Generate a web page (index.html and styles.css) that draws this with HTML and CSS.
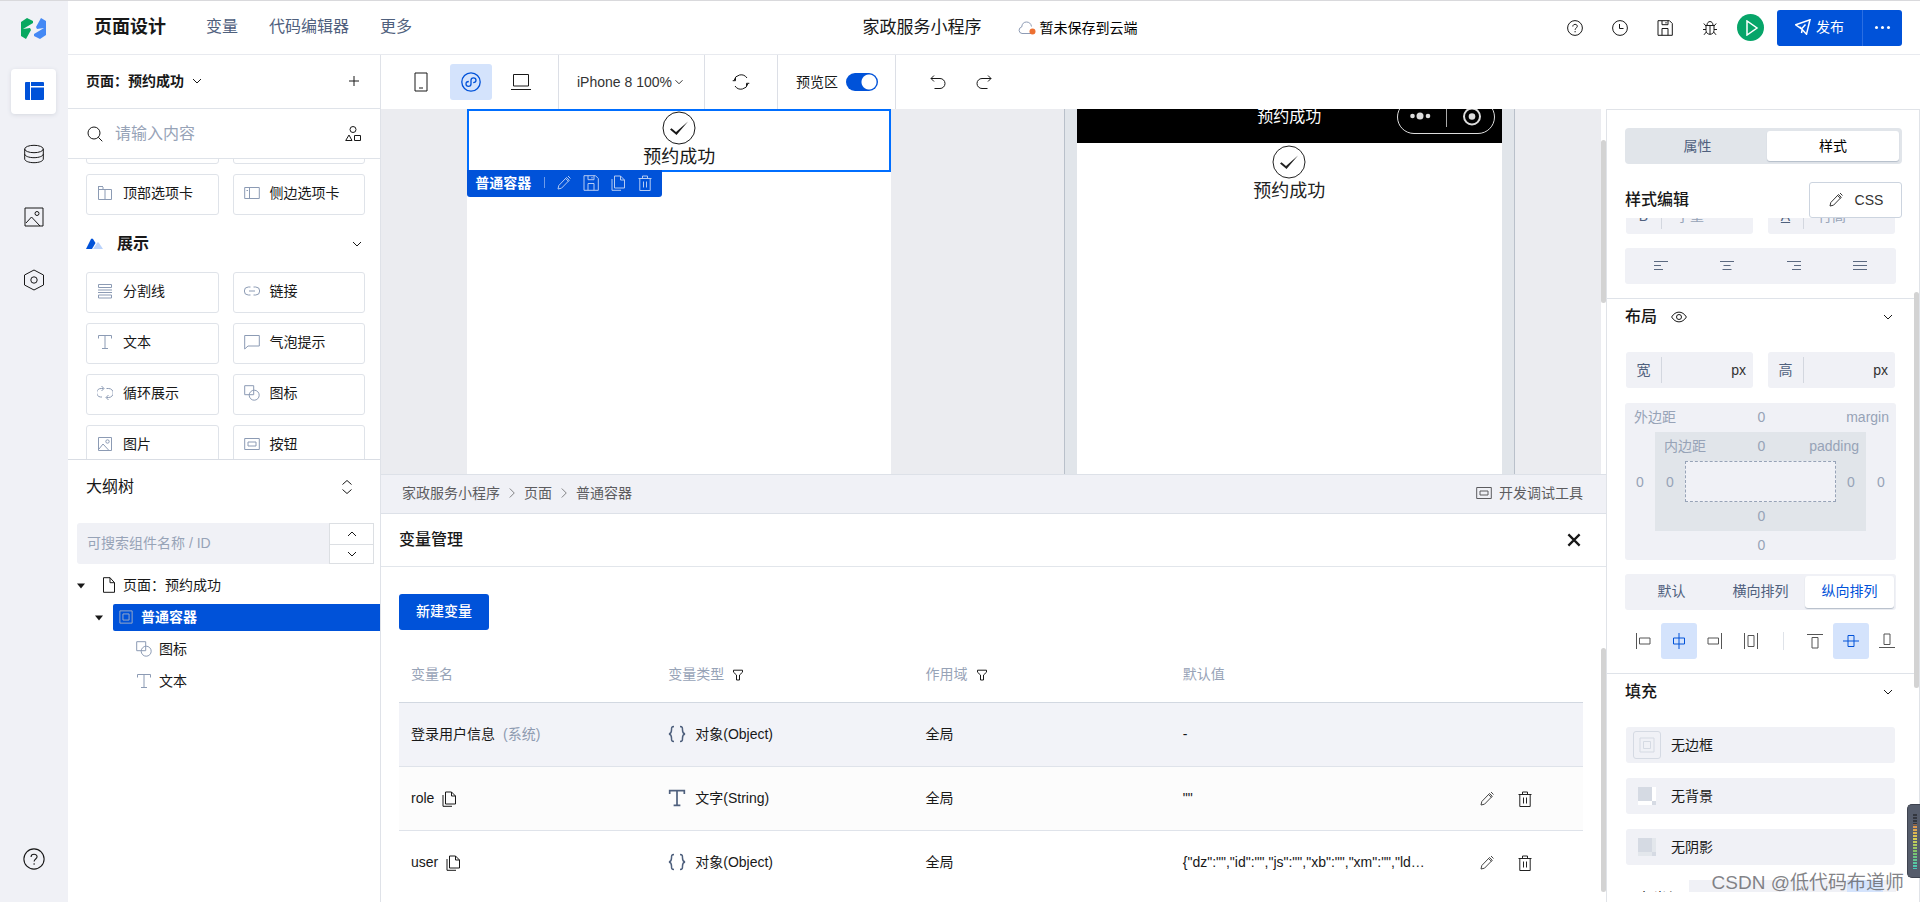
FILE: index.html
```html
<!DOCTYPE html>
<html lang="zh-CN">
<head>
<meta charset="utf-8">
<title>页面设计</title>
<link rel="stylesheet" href="styles.css">
</head>
<body>
<svg class="sprite" aria-hidden="true">
  <symbol id="i-chev" viewBox="0 0 16 16"><path d="M4 6l4 4 4-4"/></symbol>
  <symbol id="i-chev-up" viewBox="0 0 16 16"><path d="M4 10l4-4 4 4"/></symbol>
  <symbol id="i-chev-right" viewBox="0 0 16 16"><path d="M5 2l6 6-6 6"/></symbol>
  <symbol id="i-updown" viewBox="0 0 16 16"><path d="M3.500 5.500L8 1.500l4.500 4M3.500 10.500l4.500 4 4.500-4"/></symbol>
  <symbol id="i-tri" viewBox="0 0 16 16"><path d="M0 3h16L8 13z" fill="currentColor" stroke="none"/></symbol>
  <symbol id="i-layout" viewBox="0 0 20 20"><path d="M2 1h4v18H2a1 1 0 0 1-1-1V2a1 1 0 0 1 1-1zM7 1h12a1 1 0 0 1 1 1v3H7zM7 6.500h13V18a1 1 0 0 1-1 1H7z" fill="currentColor" stroke="none"/></symbol>
  <symbol id="i-db" viewBox="0 0 20 20"><ellipse cx="10" cy="5" rx="9.300" ry="3.700"/><path d="M.7 5v10c0 2 4 3.700 9.300 3.700s9.300-1.700 9.300-3.700V5M.7 10c0 2 4 3.700 9.300 3.700s9.300-1.700 9.300-3.700"/></symbol>
  <symbol id="i-img" viewBox="0 0 20 20"><path d="M1 1h18v18H1z"/><circle cx="13" cy="6.500" r="2"/><path d="M2 16l5.500-6L16 19"/></symbol>
  <symbol id="i-img-s" viewBox="0 0 16 16"><path d="M1.500 1.500h13v13h-13z"/><circle cx="10.500" cy="5.500" r="1.700"/><path d="M2 13l4-5 6 6.500"/></symbol>
  <symbol id="i-hex" viewBox="0 0 22 22"><path d="M11 1l9.500 5v10L11 21l-9.500-5V6z"/><circle cx="11" cy="11" r="3.200"/></symbol>
  <symbol id="i-help" viewBox="0 0 20 20"><circle cx="10" cy="10" r="9.200"/><path d="M7.300 8.200c0-3.400 5.500-3.300 5.500-.2 0 2-2.700 2-2.700 4.300"/><path d="M10.100 13.800v1.500"/></symbol>
  <symbol id="i-help-s" viewBox="0 0 16 16"><circle cx="8" cy="8" r="7.400"/><path d="M5.800 6.500c0-2.900 4.500-2.800 4.500-.2 0 1.700-2.200 1.600-2.200 3.500M8.100 11v1.300"/></symbol>
  <symbol id="i-clock" viewBox="0 0 16 16"><circle cx="8" cy="8" r="7.400"/><path d="M7.500 4v4.500H11.500"/></symbol>
  <symbol id="i-save" viewBox="0 0 16 16"><path d="M1 .7h11.500L15.300 3.500v11.800H1zM5 .7v4h6v-4M9 2v1.500M5 15.300V8.500h6v6.800"/></symbol>
  <symbol id="i-bug" viewBox="0 0 16 16"><path d="M4 5.500h8v5c0 5-8 5-8 0zM5 5.300c0-5 6-5 6 0M8 6v8.500M1 9.500h3M12 9.500h3M4 6L1.800 3.500M12 6l2.200-2.500M4.300 12L2 14.800M11.700 12l2.300 2.800"/></symbol>
  <symbol id="i-plus" viewBox="0 0 16 16"><path d="M3 8h10M8 3v10"/></symbol>
  <symbol id="i-search" viewBox="0 0 16 16"><circle cx="7" cy="7" r="6"/><path d="M11.300 11.300l4 4"/></symbol>
  <symbol id="i-shapes" viewBox="0 0 16 16"><circle cx="8" cy="3.500" r="3"/><path d="M.7 14.500L4 9l3 5.500zM9.500 9.500h6v5h-6z"/></symbol>
  <symbol id="i-toptab" viewBox="0 0 16 16"><path d="M1.500 4.500h13v10h-13zM1 1.500h5M8 4.500v10M1.500 2v3M6 2v2"/></symbol>
  <symbol id="i-sidetab" viewBox="0 0 16 16"><path d="M.7 2.500h14.600v11H.7zM5.500 2.500v11M2.500 5.500h1.500"/></symbol>
  <symbol id="i-divider" viewBox="0 0 16 16"><path d="M1.500 1.500h13v3h-13zM1 7h14M1 9.500h14M1.500 12h13v3h-13z"/></symbol>
  <symbol id="i-link" viewBox="0 0 16 16"><path d="M6.500 4H4.300a4 4 0 0 0 0 8h2.200M9.500 4h2.200a4 4 0 0 1 0 8H9.500M5 8h6"/></symbol>
  <symbol id="i-text" viewBox="0 0 16 16"><path d="M1.500 4.500v-3h13v3M8 1.500v13M5 14.500h6"/></symbol>
  <symbol id="i-bubble" viewBox="0 0 16 16"><path d="M.7 1.500h14.600v10.500H4L.7 15z"/></symbol>
  <symbol id="i-loop" viewBox="0 0 16 16"><path d="M6.500 3.500H4.300a4 4 0 0 0-.8 8.500H5M4.500 1L7 3.500 4.500 6M9.500 12.500h2.200a4 4 0 0 0 0-9H9.500M11.500 10L9 12.500l2.500 2.500"/></symbol>
  <symbol id="i-combo" viewBox="0 0 16 16"><path d="M.7.700h9v9h-9z"/><circle cx="10.200" cy="10.200" r="5"/></symbol>
  <symbol id="i-button" viewBox="0 0 16 16"><path d="M.7 2.500h14.600v11H.7zM4 6h8v4H4z"/></symbol>
  <symbol id="i-page" viewBox="0 0 16 16"><path d="M2.500.700h6.500l4.500 5v9.600h-11zM9 .7v5h4.500"/></symbol>
  <symbol id="i-box" viewBox="0 0 16 16"><path d="M1 1h14v14H1zM4.500 4.500h7v7h-7z"/></symbol>
  <symbol id="i-phone" viewBox="0 0 14 20"><path d="M1 1h12v18H1zM5 16h4"/></symbol>
  <symbol id="i-mini" viewBox="0 0 20 20"><circle cx="10" cy="10" r="9.200"/><path d="M7.800 9.500c-1.800 0-2.800 1-2.800 2.400 0 3.200 5 3.200 5 0V8.200c0-3.200 5-3.200 5 0 0 1.400-1 2.400-2.800 2.400"/></symbol>
  <symbol id="i-laptop" viewBox="0 0 20 18"><path d="M2.500 1.500h15v11.500h-15zM0 16.500h20"/></symbol>
  <symbol id="i-refresh" viewBox="0 0 18 18"><path d="M2 7.500A7.200 7.200 0 0 1 15 5M16 10.500A7.200 7.200 0 0 1 3 13M.7 7.700h2.800V5M17.300 10.300h-2.800V13"/></symbol>
  <symbol id="i-undo" viewBox="0 0 16 16"><path d="M4 1.500L1 4.500l3 3M1 4.500h9a5 5 0 0 1 0 10H4.500"/></symbol>
  <symbol id="i-redo" viewBox="0 0 16 16"><path d="M12 1.500l3 3-3 3M15 4.500H6a5 5 0 0 0 0 10h5.500"/></symbol>
  <symbol id="i-cloud" viewBox="0 0 18 14"><path d="M13 12.500H4a3.300 3.300 0 0 1-.3-6.500C4 2.500 6 1 8.500 1S13 2.500 13.500 5.500"/><circle cx="14.500" cy="10.500" r="3" fill="#ed7032" stroke="none"/></symbol>
  <symbol id="i-pencil" viewBox="0 0 16 16"><path d="M2 14l.8-3.500 7.700-8 2.800 2.700-7.800 8zM9.500 3.500l3 2.800M12 1l2.500 2.500"/></symbol>
  <symbol id="i-copy" viewBox="0 0 16 16"><path d="M4.500 1h6L14.500 5v8h-10zM10.500 1v4h4M2 4v11.300h9"/></symbol>
  <symbol id="i-trash" viewBox="0 0 16 16"><path d="M2.800 3.500h10.400v12H2.800zM1.500 3.500h13M5.500 3.300V1h5v2.300M6.500 6.500v6M9.500 6.500v6"/></symbol>
  <symbol id="i-check" viewBox="0 0 34 34"><circle cx="17" cy="17" r="16"/><path d="M8 18.500l1.500-1.300L14 21 26 10.500 14.500 24z" fill="currentColor" stroke="none"/></symbol>
  <symbol id="i-funnel" viewBox="0 0 12 12"><path d="M1.500 1.200h9v2L7.500 6v5h-3V6l-3-2.800z"/></symbol>
  <symbol id="i-brace" viewBox="0 0 18 18"><path d="M6 1.500c-2.500 0-2.500 1-2.500 3.500S3.300 8.500 1 9c2.300.5 2.500 1.500 2.500 4s0 3.500 2.500 3.500M12 1.500c2.500 0 2.500 1 2.500 3.500s.2 3.500 2.500 4c-2.300.5-2.500 1.500-2.500 4s0 3.500-2.500 3.500"/></symbol>
  <symbol id="i-close" viewBox="0 0 16 16"><path d="M3 3l10 10M13 3L3 13"/></symbol>
  <symbol id="i-plane" viewBox="0 0 16 16"><path d="M.8 5.800L15 .8l-3.500 14.400-4.300-4.700zM7.200 10.500l-.7 3.500M4.500 7.800l2.200 2L10.500 5.500"/></symbol>
  <symbol id="i-eye" viewBox="0 0 16 12"><path d="M.6 6C4.500-.5 11.500-.5 15.400 6c-3.900 6.500-10.900 6.500-14.800 0z"/><circle cx="8" cy="6" r="2.500"/></symbol>
  <symbol id="i-al" viewBox="0 0 14 12"><path d="M0 1.500h14M0 5.500h7M0 9.500h9"/></symbol>
  <symbol id="i-ac" viewBox="0 0 14 12"><path d="M0 1.500h14M3.500 5.500h7M2.500 9.500h9"/></symbol>
  <symbol id="i-ar" viewBox="0 0 14 12"><path d="M0 1.500h14M7 5.500h7M5 9.500h9"/></symbol>
  <symbol id="i-aj" viewBox="0 0 14 12"><path d="M0 1.500h14M0 5.500h14M0 9.500h14"/></symbol>
  <symbol id="i-jl" viewBox="0 0 16 16"><path d="M1.500 0v16M4.500 5h10.500v6H4.500z"/></symbol>
  <symbol id="i-jc" viewBox="0 0 16 16"><path d="M8 0v16M2.500 5h11v6h-11z"/></symbol>
  <symbol id="i-jr" viewBox="0 0 16 16"><path d="M14.500 0v16M1 5h10.500v6H1z"/></symbol>
  <symbol id="i-js" viewBox="0 0 16 16"><path d="M1.500 0v16M14.500 0v16M5 2.500h6v11H5z"/></symbol>
  <symbol id="i-vt" viewBox="0 0 16 16"><path d="M0 1.500h16M5 4.500h6v10.500H5z"/></symbol>
  <symbol id="i-vc" viewBox="0 0 16 16"><path d="M0 8h16M5 2.500h6v11H5z"/></symbol>
  <symbol id="i-vb" viewBox="0 0 16 16"><path d="M0 14.500h16M5 1h6v10.500H5z"/></symbol>
</svg>

<nav class="rail" aria-label="主导航">
  <svg class="logo" viewBox="0 0 25 21" aria-hidden="true"><path fill="#07a85f" d="M0 4l6-4 6 3v2L2 11l7-1 1 2-5 9-5-3z"/><path fill="#4489f5" d="M25 17l-6 4-6-3v-2l10-6-7 1-1-2 5-9 5 3z"/></svg>
  <button class="rail-btn active" aria-label="页面"><svg class="ic s20"><use href="#i-layout"/></svg></button>
  <button class="rail-btn" aria-label="数据源"><svg class="ic s20"><use href="#i-db"/></svg></button>
  <button class="rail-btn" aria-label="素材"><svg class="ic s20"><use href="#i-img"/></svg></button>
  <button class="rail-btn" aria-label="设置"><svg class="ic s22"><use href="#i-hex"/></svg></button>
  <button class="rail-btn rail-help" aria-label="帮助"><svg class="ic s22"><use href="#i-help"/></svg></button>
</nav>

<div class="app">
  <header class="topbar">
    <div class="top-left">
      <h1>页面设计</h1>
      <nav class="top-nav"><a href="#">变量</a><a href="#">代码编辑器</a><a href="#">更多</a></nav>
    </div>
    <div class="top-center">
      <span class="app-name">家政服务小程序</span>
      <span class="save-state"><svg class="ic cloud"><use href="#i-cloud"/></svg>暂未保存到云端</span>
    </div>
    <div class="top-right">
      <button aria-label="帮助"><svg class="ic s16"><use href="#i-help-s"/></svg></button>
      <button aria-label="历史"><svg class="ic s16"><use href="#i-clock"/></svg></button>
      <button aria-label="保存"><svg class="ic s16"><use href="#i-save"/></svg></button>
      <button aria-label="调试"><svg class="ic s16"><use href="#i-bug"/></svg></button>
      <button class="play" aria-label="预览"><svg class="ic s16" viewBox="0 0 16 16"><path d="M4 1v14l10-7z"/></svg></button>
      <div class="publish"><button class="pub-main"><svg class="ic s16"><use href="#i-plane"/></svg>发布</button><button class="pub-more" aria-label="更多发布选项"><i></i><i></i><i></i></button></div>
    </div>
  </header>

  <div class="body">
    <aside class="left">
      <div class="page-head">
        <button class="page-pick">页面：预约成功<svg class="ic s16"><use href="#i-chev"/></svg></button>
        <button aria-label="新建页面"><svg class="ic s16"><use href="#i-plus"/></svg></button>
      </div>
      <div class="comp-search">
        <svg class="ic s16"><use href="#i-search"/></svg>
        <input type="text" placeholder="请输入内容" aria-label="搜索组件">
        <button aria-label="组件库"><svg class="ic s16"><use href="#i-shapes"/></svg></button>
      </div>
      <div class="comp-list">
        <div class="comp-scroll">
          <div class="comp-grid">
            <div class="comp"></div><div class="comp"></div>
            <div class="comp"><svg class="ic"><use href="#i-toptab"/></svg>顶部选项卡</div>
            <div class="comp"><svg class="ic"><use href="#i-sidetab"/></svg>侧边选项卡</div>
          </div>
          <h2 class="comp-title"><svg class="mount" viewBox="0 0 17 11"><path fill="#0052d9" d="M0 11L5 1q1-1 2 0l2.500 4L6 11z"/><path fill="#bbd3fb" d="M7 11l4-6q1-1.500 2 0l4 6z"/></svg>展示<svg class="ic s16"><use href="#i-chev"/></svg></h2>
          <div class="comp-grid">
            <div class="comp"><svg class="ic"><use href="#i-divider"/></svg>分割线</div>
            <div class="comp"><svg class="ic"><use href="#i-link"/></svg>链接</div>
            <div class="comp"><svg class="ic"><use href="#i-text"/></svg>文本</div>
            <div class="comp"><svg class="ic"><use href="#i-bubble"/></svg>气泡提示</div>
            <div class="comp"><svg class="ic"><use href="#i-loop"/></svg>循环展示</div>
            <div class="comp"><svg class="ic"><use href="#i-combo"/></svg>图标</div>
            <div class="comp"><svg class="ic"><use href="#i-img-s"/></svg>图片</div>
            <div class="comp"><svg class="ic"><use href="#i-button"/></svg>按钮</div>
          </div>
        </div>
      </div>
      <section class="outline">
        <div class="outline-head"><h2>大纲树</h2><button aria-label="展开收起"><svg class="ic s16"><use href="#i-updown"/></svg></button></div>
        <div class="outline-search">
          <input type="text" placeholder="可搜索组件名称 / ID" aria-label="搜索大纲">
          <div class="stepper"><button aria-label="上一个"><svg class="ic s16"><use href="#i-chev-up"/></svg></button><button aria-label="下一个"><svg class="ic s16"><use href="#i-chev"/></svg></button></div>
        </div>
        <ul class="tree">
          <li class="lv1"><svg class="tri"><use href="#i-tri"/></svg><span class="node"><svg class="ic s16"><use href="#i-page"/></svg>页面：预约成功</span></li>
          <li class="lv2"><svg class="tri"><use href="#i-tri"/></svg><span class="node selected"><svg class="ic s14"><use href="#i-box"/></svg>普通容器</span></li>
          <li class="lv3"><span class="node"><svg class="ic s16"><use href="#i-combo"/></svg>图标</span></li>
          <li class="lv3"><span class="node"><svg class="ic s16"><use href="#i-text"/></svg>文本</span></li>
        </ul>
      </section>
    </aside>

    <div class="work">
      <div class="toolbar">
        <div class="tb devices">
          <button aria-label="手机"><svg class="ic phone-ic"><use href="#i-phone"/></svg></button>
          <button class="on" aria-label="小程序"><svg class="ic s20"><use href="#i-mini"/></svg></button>
          <button aria-label="电脑"><svg class="ic s20"><use href="#i-laptop"/></svg></button>
        </div>
        <div class="tb model"><select aria-label="机型"><option>iPhone 8 100%</option></select><svg class="ic s14"><use href="#i-chev"/></svg></div>
        <div class="tb refresh"><button aria-label="刷新"><svg class="ic s18"><use href="#i-refresh"/></svg></button></div>
        <label class="tb preview-sw">预览区<input type="checkbox" class="switch" checked></label>
        <div class="tb history"><button aria-label="撤销"><svg class="ic s16"><use href="#i-undo"/></svg></button><button aria-label="重做"><svg class="ic s16"><use href="#i-redo"/></svg></button></div>
      </div>

      <div class="stage">
        <main class="center">
          <div class="canvas">
            <div class="canvas-in">
              <div class="device">
                <div class="picked">
                  <svg class="ic s34"><use href="#i-check"/></svg><p>预约成功</p>
                  <div class="picked-bar"><b>普通容器</b><i></i>
                    <button aria-label="编辑"><svg class="ic s16"><use href="#i-pencil"/></svg></button>
                    <button aria-label="存为模板"><svg class="ic s16"><use href="#i-save"/></svg></button>
                    <button aria-label="复制"><svg class="ic s16"><use href="#i-copy"/></svg></button>
                    <button aria-label="删除"><svg class="ic s16"><use href="#i-trash"/></svg></button>
                  </div>
                </div>
              </div>
              <div class="preview">
                <div class="device">
                  <div class="mp-head"><span>预约成功</span>
                    <svg class="capsule" viewBox="0 0 98 34" aria-hidden="true"><rect x=".5" y=".5" width="97" height="33" rx="16.500" fill="none" stroke="#ddd"/><g fill="#ddd"><circle cx="15.500" cy="16" r="2.300"/><circle cx="23" cy="16" r="3.500"/><circle cx="31" cy="16" r="2.300"/><circle cx="75" cy="16.500" r="3.300"/></g><path d="M49.500 7v20" stroke="#aaa"/><circle cx="75" cy="16.500" r="8" fill="none" stroke="#ddd" stroke-width="2"/></svg>
                  </div>
                  <div class="mp-body"><svg class="ic s34"><use href="#i-check"/></svg><p>预约成功</p></div>
                </div>
              </div>
            </div>
            <div class="track"><div class="thumb thumb-canvas"></div></div>
          </div>
          <div class="crumbs">
            <nav><a href="#">家政服务小程序</a><svg class="ic s12"><use href="#i-chev-right"/></svg><a href="#">页面</a><svg class="ic s12"><use href="#i-chev-right"/></svg><a href="#">普通容器</a></nav>
            <button><svg class="ic s16"><use href="#i-button"/></svg>开发调试工具</button>
          </div>
          <section class="vars">
            <div class="vars-head"><h2>变量管理</h2><button aria-label="关闭"><svg class="ic s18 bold"><use href="#i-close"/></svg></button></div>
            <div class="vars-body">
              <button class="primary">新建变量</button>
              <table>
                <colgroup><col class="c"><col class="c"><col class="c"><col class="c"><col class="a"></colgroup>
                <thead><tr><th>变量名</th><th>变量类型<svg class="ic s12"><use href="#i-funnel"/></svg></th><th>作用域<svg class="ic s12"><use href="#i-funnel"/></svg></th><th>默认值</th><th></th></tr></thead>
                <tbody>
                  <tr class="sys"><td>登录用户信息<span class="tag">(系统)</span></td><td><svg class="ic s18 type"><use href="#i-brace"/></svg>对象(Object)</td><td>全局</td><td>-</td><td></td></tr>
                  <tr class="alt"><td>role<svg class="ic s16 cp"><use href="#i-copy"/></svg></td><td><svg class="ic s18 type"><use href="#i-text"/></svg>文字(String)</td><td>全局</td><td>""</td><td class="acts"><button aria-label="编辑 role"><svg class="ic s16"><use href="#i-pencil"/></svg></button><button aria-label="删除 role"><svg class="ic s16"><use href="#i-trash"/></svg></button></td></tr>
                  <tr><td>user<svg class="ic s16 cp"><use href="#i-copy"/></svg></td><td><svg class="ic s18 type"><use href="#i-brace"/></svg>对象(Object)</td><td>全局</td><td>{"dz":"","id":"","js":"","xb":"","xm":"","ld…</td><td class="acts"><button aria-label="编辑 user"><svg class="ic s16"><use href="#i-pencil"/></svg></button><button aria-label="删除 user"><svg class="ic s16"><use href="#i-trash"/></svg></button></td></tr>
                </tbody>
              </table>
              <div class="thumb thumb-vars"></div>
            </div>
          </section>
        </main>

        <aside class="props">
          <div class="tabs"><button>属性</button><button class="on">样式</button></div>
          <div class="style-head"><h2>样式编辑</h2><button><svg class="ic s16"><use href="#i-pencil"/></svg>CSS</button></div>
          <div class="props-view">
            <div class="props-scroll">
              <section>
                <div class="pair">
                  <label class="field"><b>B</b><select><option>字重</option></select><svg class="ic s12"><use href="#i-chev"/></svg></label>
                  <label class="field"><u>A</u><input type="text" placeholder="行高"></label>
                </div>
                <div class="aligns">
                  <button aria-label="左对齐"><svg class="ic al"><use href="#i-al"/></svg></button><button aria-label="居中"><svg class="ic al"><use href="#i-ac"/></svg></button><button aria-label="右对齐"><svg class="ic al"><use href="#i-ar"/></svg></button><button aria-label="两端对齐"><svg class="ic al"><use href="#i-aj"/></svg></button>
                </div>
              </section>
              <section>
                <h3>布局<svg class="ic eye"><use href="#i-eye"/></svg><svg class="ic s16 end"><use href="#i-chev"/></svg></h3>
                <div class="pair size">
                  <label class="field"><span>宽</span><input type="text"><em>px</em></label>
                  <label class="field"><span>高</span><input type="text"><em>px</em></label>
                </div>
                <div class="model-box">
                  <div class="mb-top"><span>外边距</span><input type="text" value="0" aria-label="上外边距"><span>margin</span></div>
                  <input type="text" value="0" aria-label="左外边距">
                  <div class="pad-box">
                    <div class="mb-top"><span>内边距</span><input type="text" value="0" aria-label="上内边距"><span>padding</span></div>
                    <input type="text" value="0" aria-label="左内边距">
                    <div class="content-box"></div>
                    <input type="text" value="0" aria-label="右内边距">
                    <div class="mb-bottom"><input type="text" value="0" aria-label="下内边距"></div>
                  </div>
                  <input type="text" value="0" aria-label="右外边距">
                  <div class="mb-bottom"><input type="text" value="0" aria-label="下外边距"></div>
                </div>
                <div class="seg"><button>默认</button><button>横向排列</button><button class="on">纵向排列</button></div>
                <div class="flexes">
                  <button aria-label="左"><svg class="ic s16"><use href="#i-jl"/></svg></button><button class="on" aria-label="水平居中"><svg class="ic s16"><use href="#i-jc"/></svg></button><button aria-label="右"><svg class="ic s16"><use href="#i-jr"/></svg></button><button aria-label="均分"><svg class="ic s16"><use href="#i-js"/></svg></button>
                  <i></i>
                  <button aria-label="顶部"><svg class="ic s16"><use href="#i-vt"/></svg></button><button class="on" aria-label="垂直居中"><svg class="ic s16"><use href="#i-vc"/></svg></button><button aria-label="底部"><svg class="ic s16"><use href="#i-vb"/></svg></button>
                </div>
              </section>
              <section class="fill">
                <h3>填充<svg class="ic s16 end"><use href="#i-chev"/></svg></h3>
                <button class="fill-row"><span class="sw-border"><svg class="ic s16"><use href="#i-box"/></svg></span>无边框</button>
                <button class="fill-row"><span class="swatch"><i></i></span>无背景</button>
                <button class="fill-row"><span class="swatch shade"><i></i></span>无阴影</button>
                <div class="radius"><span>圆角半径</span><div class="radius-field"></div></div>
              </section>
            </div>
          </div>
          <div class="thumb thumb-props"></div>
        </aside>
      </div>
    </div>
  </div>
</div>
<div class="meter" aria-hidden="true"><i></i></div>
<div class="credit">CSDN @低代码布道师</div>
</body>
</html>
```

FILE: styles.css
```css
* { box-sizing: border-box; }
body {
  margin: 0; height: 100vh; display: flex; overflow: hidden; position: relative;
  border-top: 1px solid #d9d9dc; background: #fff; color: #181818;
  font: 14px/20px "Liberation Sans", "Noto Sans CJK SC", sans-serif;
}
button, input, select { font: inherit; color: inherit; border: 0; padding: 0; margin: 0; background: none; outline: 0; }
button { display: inline-flex; align-items: center; justify-content: center; cursor: pointer; }
select { appearance: none; }
a { color: inherit; text-decoration: none; }
h1, h2, h3, p, ul { margin: 0; padding: 0; list-style: none; }
em, i { font-style: normal; }
input::placeholder { color: #97a3b7; opacity: 1; }
.sprite { position: absolute; width: 0; height: 0; }
.ic { fill: none; stroke: currentColor; stroke-width: 1; flex: none; width: 16px; height: 16px; }
.s12 { width: 12px; height: 12px; }
.s14 { width: 14px; height: 14px; }
.s16 { width: 16px; height: 16px; }
.s18 { width: 18px; height: 18px; }
.s20 { width: 20px; height: 20px; }
.s22 { width: 22px; height: 22px; }
.s34 { width: 34px; height: 34px; }
.bold { stroke-width: 2; }

/* rail */
.rail { flex: 0 0 68px; display: flex; flex-direction: column; align-items: center; gap: 18px; background: #f0f1f6; padding: 0 1px 20px 0; }
.logo { width: 25px; height: 21px; margin: 17px 0 12px; flex: none; }
.rail-btn { width: 45px; height: 45px; padding-bottom: 2px; border-radius: 4px; }
.rail-btn.active { background: #fff; color: #0052d9; box-shadow: 0 1px 4px #d5d8df; }
.rail-help { margin-top: auto; }

/* top bar */
.app { flex: 1; min-width: 0; display: flex; flex-direction: column; }
.topbar { flex: 0 0 54px; display: grid; grid-template-columns: 1fr auto 1fr; align-items: center; padding: 0 18px 0 26px; border-bottom: 1px solid #e8eaef; }
.top-left { display: flex; align-items: center; gap: 40px; padding-bottom: 2px; }
h1 { font-size: 18px; line-height: 26px; font-weight: 700; }
.top-nav { display: flex; gap: 31px; font-size: 16px; color: #4f607d; }
.top-center { display: flex; align-items: center; gap: 36px; padding-left: 4px; }
.app-name { font-size: 17px; }
.save-state { display: flex; align-items: center; gap: 4px; color: #000; }
.cloud { width: 18px; height: 14px; color: #8e9cb5; }
.top-right { display: flex; align-items: center; justify-content: flex-end; gap: 29px; }
.play { width: 27px; height: 27px; border-radius: 50%; background: #07a569; color: #fff; margin-left: -10px; }
.play .ic { stroke-width: 1.5; }
.publish { display: flex; height: 36px; border-radius: 3px; overflow: hidden; background: #0052d9; color: #fff; margin-left: -16px; }
.pub-main { width: 86px; gap: 5px; padding-bottom: 2px; border-right: 1px solid #2a6ee2; }
.pub-main .ic { stroke-width: 1.5; }
.pub-more { width: 39px; gap: 3px; }
.pub-more i { width: 3px; height: 3px; border-radius: 50%; background: #fff; }

/* left panel */
.body { flex: 1; min-height: 0; display: flex; }
.left { flex: 0 0 313px; display: flex; flex-direction: column; border-right: 1px solid #dfe2e8; }
.page-head { flex: 0 0 54px; display: flex; align-items: center; justify-content: space-between; padding: 0 18px 2px; border-bottom: 1px solid #dfe3e9; }
.page-pick { font-weight: 700; gap: 5px; }
.comp-search { flex: 0 0 50px; display: flex; align-items: center; gap: 12px; padding: 0 19px; border-bottom: 1px solid #dfe3e9; }
.comp-search input { flex: 1; min-width: 0; font-size: 16px; }
.comp-list { flex: 0 0 300px; overflow: hidden; }
.comp-scroll { margin-top: -36px; padding: 0 15px 0 18px; }
.comp-grid { display: grid; grid-template-columns: 1fr 1fr; gap: 10px 14px; }
.comp { display: flex; align-items: center; gap: 10px; height: 41px; padding: 0 10px 3px; border: 1px solid #dfe3e9; border-radius: 3px; }
.comp .ic { color: #8c9bb4; }
.comp-title { display: flex; align-items: center; height: 57px; font-size: 16px; font-weight: 700; }
.mount { width: 17px; height: 11px; margin-right: 14px; }
.comp-title .ic { margin-left: auto; }
.outline { flex: 1; border-top: 1px solid #d9dde4; }
.outline-head { display: flex; align-items: center; justify-content: space-between; padding: 0 25px 10px 18px; height: 63px; }
.outline-head h2 { font-size: 16px; font-weight: 400; }
.outline-search { display: flex; height: 41px; margin: 0 6px 0 9px; }
.outline-search input { flex: 1; min-width: 0; background: #f0f1f6; border-radius: 3px 0 0 3px; padding: 0 10px 2px; }
.stepper { width: 45px; display: grid; grid-template-rows: 1fr 1fr; border: 1px solid #dcdfe3; }
.stepper button + button { border-top: 1px solid #dcdfe3; }
.tree { display: flex; flex-direction: column; gap: 5px; padding-top: 8px; }
.tree li { display: flex; align-items: center; height: 27px; }
.tri { width: 8px; height: 8px; flex: none; }
.node { display: flex; align-items: center; gap: 8px; flex: 1; height: 27px; padding-bottom: 2px; }
.lv1 { padding-left: 9px; }
.lv1 .node { padding-left: 16px; gap: 6px; }
.lv2 { padding-left: 27px; }
.lv2 .node { margin-left: 10px; padding-left: 6px; }
.selected { background: #0052d9; color: #fff; font-weight: 700; border-radius: 2px 0 0 2px; }
.selected .ic { color: #a9b3c6; }
.lv3 { padding-left: 68px; }
.lv3 .node { gap: 7px; }
.lv3 .ic { color: #8c9bb4; }

/* toolbar */
.work { flex: 1; min-width: 0; display: flex; flex-direction: column; }
.toolbar { flex: 0 0 54px; display: flex; }
.tb { display: flex; align-items: center; border-right: 1px solid #dcdfe6; }
.devices { gap: 8px; padding: 0 16px 0 19px; }
.devices button { width: 42px; height: 36px; border-radius: 3px; }
.devices .on { background: #d4e3fc; color: #0052d9; }
.devices .on .ic { stroke-width: 1.3; }
.devices .phone-ic { width: 14px; height: 20px; }
.model { padding: 0 18px; color: #333; }
.model .ic { color: #181818; }
.refresh { width: 73px; justify-content: center; }
.preview-sw { padding: 0 17px 0 18px; gap: 8px; }
.switch { appearance: none; width: 32px; height: 18px; border-radius: 9px; background: radial-gradient(circle at 23px 9px, #fff 7px, #0052d9 8px); }
.history { border: 0; padding-left: 34px; gap: 30px; }

/* canvas */
.stage { flex: 1; min-height: 0; display: flex; }
.center { flex: 1; min-width: 0; display: flex; flex-direction: column; }
.canvas { flex: 1; min-height: 0; display: flex; }
.canvas-in { flex: 1; display: flex; justify-content: space-around; background: #ebecf0; overflow: hidden; }
.track { width: 5px; position: relative; }
.thumb { position: absolute; width: 5px; border-radius: 3px; background: #d3d3d3; right: 0; }
.thumb-canvas { top: 31px; height: 163px; }
.device { width: 424px; background: #fff; }
.picked { position: relative; border: 2px solid #006eff; display: flex; flex-direction: column; align-items: center; }
.picked p, .mp-body p { font-size: 18px; line-height: 25px; }
.picked-bar { position: absolute; top: 100%; left: -2px; display: flex; align-items: center; height: 27px; padding: 0 9px 2px 8px; gap: 11px; background: #0052d9; color: #b5cbf3; border-radius: 0 0 3px 3px; }
.picked-bar b { color: #fff; }
.picked-bar i { width: 1px; height: 11px; background: #6d9bea; margin-left: 2px; }
.preview { display: flex; padding: 0 12px; background: #e1e5ea; border: solid #b9c0ca; border-width: 0 1px; }
.preview .device { width: 425px; }
.mp-head { position: relative; height: 52px; margin-top: -18px; background: #000; color: #fff; display: flex; align-items: center; justify-content: center; font-size: 16px; }
.capsule { position: absolute; right: 7px; top: 9px; width: 98px; height: 34px; }
.mp-body { display: flex; flex-direction: column; align-items: center; padding-top: 2px; color: #222; }

/* bottom */
.crumbs { flex: 0 0 40px; display: flex; align-items: center; justify-content: space-between; padding: 0 23px 2px 21px; background: #f0f1f6; border: solid #dde1e8; border-width: 1px 0; color: #5c5c5f; }
.crumbs nav { display: flex; align-items: center; gap: 6px; }
.crumbs button { gap: 7px; }
.vars-head { display: flex; align-items: center; justify-content: space-between; height: 53px; padding: 0 23px 0 18px; border-bottom: 1px solid #e2e6eb; }
.vars-head h2 { font-size: 16px; font-weight: 500; }
.vars-body { position: relative; padding: 27px 23px 7px 18px; }
.thumb-vars { top: 81px; height: 244px; }
.primary { height: 36px; padding: 0 17px 3px; border-radius: 3px; background: #0052d9; color: #fff; font-weight: 500; }
table { width: 100%; margin-top: 16px; border-collapse: separate; border-spacing: 0; table-layout: fixed; }
.a { width: 155px; }
th, td { height: 64px; padding: 0 12px 2px; text-align: left; font-weight: 400; border-bottom: 1px solid #dfe3ea; white-space: nowrap; }
th { height: 57px; padding-bottom: 0; color: #97a3b7; border-color: #d2d8e1; }
th .ic { color: #181818; margin-left: 8px; vertical-align: -2px; }
tr:last-child td { border: 0; }
.sys td { background: #f2f3f8; }
.alt td { background: #fcfcfc; }
.tag { color: #8e9bb1; margin-left: 8px; }
.type { color: #4f607d; stroke-width: 1.5; margin-right: 9px; vertical-align: -4px; }
.cp { margin-left: 7px; vertical-align: -4px; }
.acts { color: #444; padding-left: 51px; }
.acts button { vertical-align: middle; }
.acts button + button { margin-left: 22px; color: #222; }

/* properties */
.props { position: relative; flex: 0 0 314px; display: flex; flex-direction: column; border: 1px solid #e0e3e8; border-bottom: 0; padding-bottom: 10px; }
.tabs { display: grid; grid-template-columns: 1fr 132px; margin: 18px 17px 0 18px; height: 36px; padding: 3px; border-radius: 4px; background: #e1e5ea; color: #4f607d; }
.tabs .on { background: #fff; color: #000; border-radius: 3px; box-shadow: 0 1px 1px #b4bdc9; }
.style-head { display: flex; align-items: center; justify-content: space-between; margin: 18px 17px 0 18px; }
h2, h3 { font-size: 16px; font-weight: 500; }
.style-head button { width: 93px; height: 36px; gap: 11px; border: 1px solid #ccd4df; border-radius: 3px; color: #333; }
.props-view { flex: 1; min-height: 0; overflow: hidden; }
.props-scroll { margin-top: -20px; }
.props section { border-bottom: 1px solid #dfe3e9; padding: 0 23px 14px 18px; }
.props h3 { display: flex; align-items: center; gap: 14px; height: 36px; margin-bottom: 17px; }
.eye { width: 16px; height: 12px; }
.end { margin-left: auto; }
.pair { display: grid; grid-template-columns: 1fr 1fr; gap: 15px; padding: 0 1px; }
.field { display: flex; align-items: center; height: 36px; background: #f0f1f6; border-radius: 3px; padding-right: 7px; color: #4f607d; }
.field > :first-child { width: 36px; text-align: center; border-right: 1px solid #d3d7df; line-height: 26px; font-weight: 400; }
.field input, .field select { flex: 1; min-width: 0; width: 40px; padding-left: 14px; color: #97a3b7; }
.field em { color: #333; }
.aligns { display: grid; grid-template-columns: repeat(4, 1fr); height: 36px; margin-top: 14px; padding: 0 3px; background: #f0f1f6; border-radius: 3px; color: #5b6980; }
.al { width: 14px; height: 12px; }
.model-box, .pad-box { display: grid; grid-template-columns: 30px 1fr 30px; grid-template-rows: 29px auto 29px; align-items: center; background: #f0f1f6; color: #97a3b7; }
.model-box { margin-top: 15px; border-radius: 3px; }
.pad-box { background: #e1e5ea; }
.model-box input { width: 100%; min-width: 0; text-align: center; }
.mb-top, .mb-bottom { grid-column: 1 / -1; display: grid; grid-template-columns: 1fr 20px 1fr; padding: 0 7px 2px 9px; }
.mb-top span:last-child { text-align: right; }
.mb-bottom input { grid-column: 2; }
.content-box { height: 41px; background: #f0f1f6; border: 1px dashed #97a3b7; }
.seg { display: grid; grid-template-columns: 1fr 1fr 1fr; height: 36px; margin-top: 14px; padding: 2px; background: #f0f1f6; border-radius: 3px; color: #4f607d; }
.seg button { padding-bottom: 3px; }
.seg .on { background: #fff; color: #0052d9; border-radius: 3px; box-shadow: 0 1px 1px #b4bdc9; }
.flexes { display: flex; align-items: center; margin: 13px -10px 0 0; color: #555; }
.flexes button { width: 36px; height: 36px; border-radius: 3px; flex: none; }
.flexes .on { background: #d4e3fc; color: #0052d9; }
.flexes i { width: 1px; height: 18px; background: #dfe3e9; margin: 0 13px 0 14px; }
.fill-row { display: flex; width: calc(100% - 2px); height: 36px; margin: 0 1px 15px; padding: 0 0 1px 7px; justify-content: flex-start; background: #f0f1f6; border-radius: 3px; gap: 10px; }
.sw-border { display: grid; place-items: center; width: 28px; height: 28px; border: 1px solid #d5dae3; border-radius: 3px; color: #d5dae3; }
.swatch { position: relative; width: 18px; height: 18px; margin: 0 5px; background: #fff; }
.swatch::before { content: ""; position: absolute; left: 0; top: 0; width: 14px; height: 14px; background: #d5dae3; }
.swatch i { position: absolute; right: 0; bottom: 0; width: 4px; height: 4px; background: #d5dae3; }
.swatch.shade { background: #e3e7ec; }
.radius { display: flex; justify-content: space-between; }
.radius-field { width: 207px; height: 36px; background: linear-gradient(90deg, #f0f1f6 158px, #d4e3fc 158px 194px, #f0f1f6 194px); }
.radius span { padding-top: 8px; }
.thumb-props { top: 182px; height: 396px; }

/* overlays */
.meter { position: absolute; right: 0; top: 803px; width: 13px; height: 74px; padding: 9px 3px 8px 5px; background: #555c6b; border: 1px solid #3e434f; border-right: 0; border-radius: 5px 0 0 5px; }
.meter i { display: block; height: 100%; background: repeating-linear-gradient(transparent 0 2px, #555c6b 2px 3px), linear-gradient(#33373f 18%, #e0904e 20%, #d9cf54 45%, #7cc46c 70%, #45c9bd); }
.credit { position: absolute; right: 16px; bottom: 5px; font-size: 19px; line-height: 28px; color: rgba(90, 90, 95, .75); }
```
